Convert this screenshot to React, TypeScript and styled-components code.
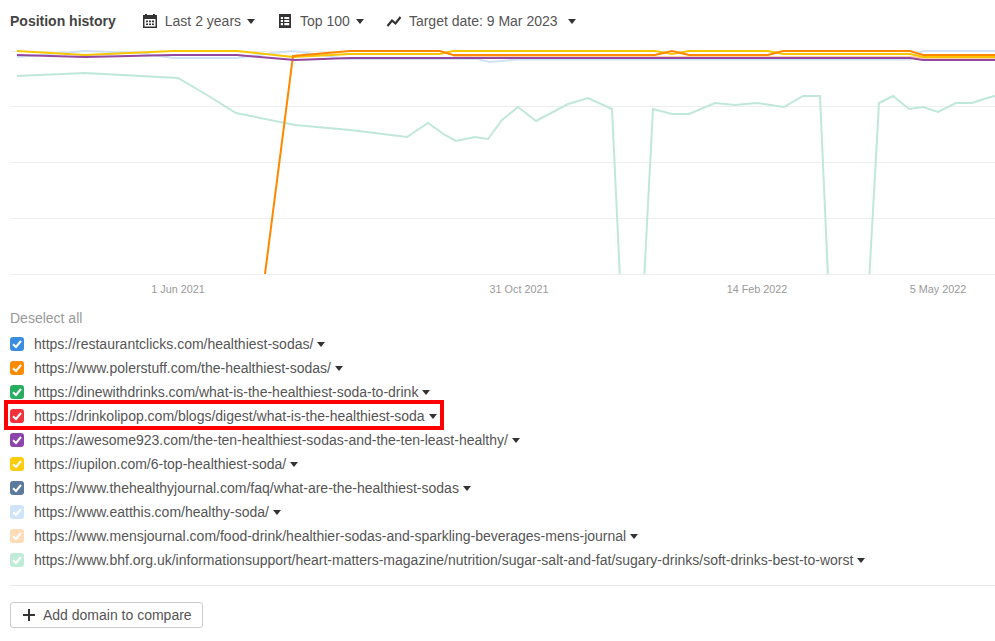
import React from "react";
import styled, { createGlobalStyle } from "styled-components";

const Global = createGlobalStyle`
  html, body { margin: 0; padding: 0; background: #fff; }
  body { font-family: "Liberation Sans", Arial, sans-serif; color: #444; }
`;

const Page = styled.div`
  width: 995px;
  height: 641px;
  overflow: hidden;
  display: flex;
  flex-direction: column;
`;

const Toolbar = styled.div`
  display: flex;
  align-items: center;
  height: 42px;
  padding-left: 10px;
  font-size: 14px;
  color: #555;
`;

const Title = styled.div`
  font-size: 14px;
  font-weight: 700;
  color: #444;
  margin-right: 26px;
`;

const Filter = styled.div<{ $gap?: number }>`
  display: flex;
  align-items: center;
  margin-right: ${(p) => p.$gap ?? 22}px;
`;

const FilterIcon = styled.svg`
  width: 16px;
  height: 16px;
  margin-right: 7px;
  fill: #333;
  flex: none;
`;

const Caret = styled.span<{ $ml?: number }>`
  display: inline-block;
  width: 0;
  height: 0;
  margin-left: ${(p) => p.$ml ?? 6}px;
  border-left: 4px solid transparent;
  border-right: 4px solid transparent;
  border-top: 5px solid #333;
  flex: none;
`;

const ChartSvg = styled.svg`
  display: block;
  width: 995px;
  height: 258px;
  flex: none;
`;

const AxisLabel = styled.text`
  font-family: "Liberation Sans", Arial, sans-serif;
  font-size: 10.8px;
  fill: #999;
  text-anchor: middle;
`;

const Deselect = styled.div`
  margin: 10px 0 0 10px;
  height: 16px;
  line-height: 16px;
  font-size: 14px;
  color: #999;
`;

const List = styled.div`
  margin-top: 6px;
  display: flex;
  flex-direction: column;
  align-items: flex-start;
`;

const Row = styled.div<{ $marked?: boolean }>`
  position: relative;
  display: flex;
  align-items: center;
  height: 24px;
  padding-left: 10px;
  font-size: 14px;
  color: #555;
  white-space: nowrap;
  ${(p) =>
    p.$marked &&
    `
    &::after {
      content: "";
      position: absolute;
      left: 4px;
      right: -7px;
      top: -4px;
      bottom: -2px;
      border: 4px solid #f00;
      box-sizing: border-box;
    }
  `}
`;

const Check = styled.span<{ $color: string }>`
  width: 14px;
  height: 14px;
  border-radius: 3px;
  background: ${(p) => p.$color};
  margin-right: 10px;
  flex: none;
  display: flex;
  align-items: center;
  justify-content: center;
`;

const CheckMark = styled.svg`
  width: 10px;
  height: 10px;
  fill: none;
  stroke: #fff;
  stroke-width: 2;
`;

const Divider = styled.div`
  margin: 13px 0 0 10px;
  width: 985px;
  height: 1px;
  background: #e8e8e8;
`;

const AddButton = styled.button`
  margin: 16px 0 0 10px;
  width: 193px;
  height: 26px;
  padding: 0 0 0 11px;
  box-sizing: border-box;
  display: flex;
  align-items: center;
  background: #fff;
  border: 1px solid #ccc;
  border-radius: 3px;
  font-family: inherit;
  font-size: 14px;
  color: #555;
`;

const PlusIcon = styled.svg`
  width: 14px;
  height: 14px;
  margin-right: 7px;
  stroke: #333;
  stroke-width: 2;
  fill: none;
`;

const rows = [
  { url: "https://restaurantclicks.com/healthiest-sodas/", color: "#3a8ddf" },
  { url: "https://www.polerstuff.com/the-healthiest-sodas/", color: "#ff8c00" },
  { url: "https://dinewithdrinks.com/what-is-the-healthiest-soda-to-drink", color: "#27ae60" },
  { url: "https://drinkolipop.com/blogs/digest/what-is-the-healthiest-soda", color: "#f0323c", marked: true },
  { url: "https://awesome923.com/the-ten-healthiest-sodas-and-the-ten-least-healthy/", color: "#8e44ad" },
  { url: "https://iupilon.com/6-top-healthiest-soda/", color: "#ffcc0a" },
  { url: "https://www.thehealthyjournal.com/faq/what-are-the-healthiest-sodas", color: "#5b7a9d" },
  { url: "https://www.eatthis.com/healthy-soda/", color: "#cfe3f9" },
  { url: "https://www.mensjournal.com/food-drink/healthier-sodas-and-sparkling-beverages-mens-journal", color: "#ffdcb8" },
  { url: "https://www.bhf.org.uk/informationsupport/heart-matters-magazine/nutrition/sugar-salt-and-fat/sugary-drinks/soft-drinks-best-to-worst", color: "#c0ebd9" },
];

// Chart coordinates: page y minus 42.
const off = (pts: number[][]) => pts.map(([x, y]) => `${x},${y - 42}`).join(" ");

const mint = off([[17,76],[85,73],[178,78],[207,95],[236,113],[295,125],[350,130],[407,137],[428,123],[445,135],[456,141],[475,137],[488,139],[502,120],[518,107],[536,121],[568,104],[588,98],[612,109],[621,300],[643,300],[653,109],[672,114],[689,114],[715,103],[735,105],[757,103],[784,107],[803,96],[820,96],[829,300],[868,300],[879,103],[893,96],[909,109],[923,107],[938,112],[956,103],[972,103],[987,98],[995,96]]);
const pale = off([[17,57],[63,53],[85,51],[113,52],[140,53],[173,58],[237,58],[273,53],[293,51],[307,53],[347,59],[477,59],[490,62],[517,59.5],[910,59.5],[923,51],[995,51]]);
const peach = off([[453,57],[910,57],[923,58],[995,58]]);
const yellow = off([[17,51],[85,55],[173,51],[237,51],[293,57],[350,54],[440,54],[453,51],[655,51],[672,54],[689,51],[768,51],[783,54],[910,54],[923,57],[995,57]]);
const orange = off([[265,274],[293,56],[350,51],[440,51],[453,55],[655,55],[672,51],[689,55],[768,55],[783,51],[910,51],[923,55],[995,55]]);
const purple = off([[17,55],[85,57],[173,55],[237,55],[295,60],[350,58],[910,58],[923,60],[995,60]]);

const grid = [51, 106, 162, 218, 274];

export default function App() {
  return (
    <Page>
      <Global />
      <Toolbar>
        <Title>Position history</Title>
        <Filter $gap={22}>
          <FilterIcon viewBox="0 0 16 16">
            <path fillRule="evenodd" d="M3 1h2v1h6V1h2v1h2v13H1V2h2V1zM2.5 6v7.5h11V6h-11zM4 7.5h2v1.7H4zM7 7.5h2v1.7H7zM10 7.5h2v1.7h-2zM4 10.4h2v1.7H4zM7 10.4h2v1.7H7zM10 10.4h2v1.7h-2z" />
          </FilterIcon>
          Last 2 years
          <Caret />
        </Filter>
        <Filter $gap={22}>
          <FilterIcon viewBox="0 0 16 16">
            <path fillRule="evenodd" d="M2 1h12v14H2V1zm1.8 3v2H6V4H3.8zm3.5 0v2h4.9V4H7.3zM3.8 7v2H6V7H3.8zm3.5 0v2h4.9V7H7.3zM3.8 10v2.2H6V10H3.8zm3.5 0v2.2h4.9V10H7.3z" />
          </FilterIcon>
          Top 100
          <Caret />
        </Filter>
        <Filter>
          <FilterIcon viewBox="0 0 16 16">
            <path d="M1.5 13 6 7.5l3.5 3L14.5 4" fill="none" stroke="#333" strokeWidth="2.2" />
          </FilterIcon>
          Target date: 9 Mar 2023
          <Caret $ml={10} />
        </Filter>
      </Toolbar>

      <ChartSvg viewBox="0 0 995 258">
        <defs>
          <clipPath id="plot">
            <rect x="0" y="0" width="995" height="232" />
          </clipPath>
        </defs>
        {grid.map((y) => (
          <line key={y} x1="10" x2="995" y1={y - 41.5} y2={y - 41.5} stroke="#eeeeee" />
        ))}
        <g clipPath="url(#plot)" fill="none" strokeWidth="2">
          <polyline points={mint} stroke="#c0e8d9" />
          <polyline points={pale} stroke="#cfe2f6" />
          <polyline points={peach} stroke="#ffd2a6" />
          <polyline points={yellow} stroke="#f7c600" />
          <polyline points={orange} stroke="#ff8800" />
          <polyline points={purple} stroke="#94479f" />
        </g>
        <AxisLabel x="178" y="251">1 Jun 2021</AxisLabel>
        <AxisLabel x="519" y="251">31 Oct 2021</AxisLabel>
        <AxisLabel x="757" y="251">14 Feb 2022</AxisLabel>
        <AxisLabel x="938" y="251">5 May 2022</AxisLabel>
      </ChartSvg>

      <Deselect>Deselect all</Deselect>
      <List>
        {rows.map((r) => (
          <Row key={r.url} $marked={r.marked}>
            <Check $color={r.color}>
              <CheckMark viewBox="0 0 10 10">
                <path d="M1 5.2 4 8l5-6" />
              </CheckMark>
            </Check>
            {r.url}
            <Caret $ml={4} />
          </Row>
        ))}
      </List>
      <Divider />
      <AddButton>
        <PlusIcon viewBox="0 0 14 14">
          <path d="M7 1v12M1 7h12" />
        </PlusIcon>
        Add domain to compare
      </AddButton>
    </Page>
  );
}
